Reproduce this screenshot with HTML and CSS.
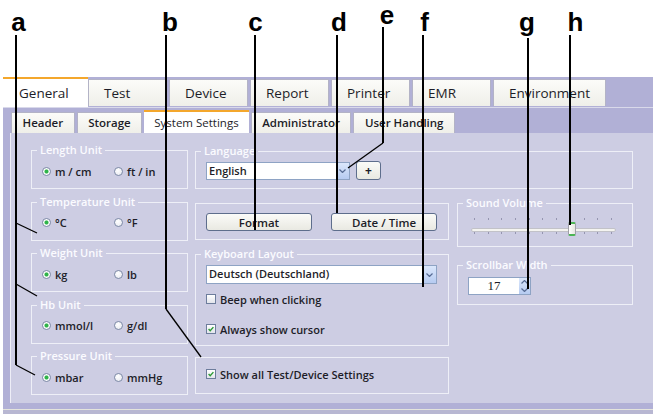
FILE: index.html
```html
<!DOCTYPE html>
<html>
<head>
    <title>System Settings</title>
    <link rel="stylesheet" href="styles.css">
</head>
<body>
    <div class="page">
        <div class="window">
            <div class="main-tabs">
                <div class="tab active">General</div>
                <div class="tab">Test</div>
                <div class="tab">Device</div>
                <div class="tab">Report</div>
                <div class="tab">Printer</div>
                <div class="tab">EMR</div>
                <div class="tab">Environment</div>
            </div>

            <div class="main-panel">
                <div class="sub-tabs">
                    <div class="sub-tab">Header</div>
                    <div class="sub-tab">Storage</div>
                    <div class="sub-tab active">System Settings</div>
                    <div class="sub-tab">Administrator</div>
                    <div class="sub-tab">User Handling</div>
                </div>

                <div class="content">
                    <!-- units -->
                    <div class="col-left">
                        <div class="group unit">
                            <span class="group-title">Length Unit</span>
                            <div class="options">
                                <label class="opt"><span class="radio on"></span>m / cm</label>
                                <label class="opt"><span class="radio"></span>ft / in</label>
                            </div>
                        </div>
                        <div class="group unit">
                            <span class="group-title">Temperature Unit</span>
                            <div class="options">
                                <label class="opt"><span class="radio on"></span>°C</label>
                                <label class="opt"><span class="radio"></span>°F</label>
                            </div>
                        </div>
                        <div class="group unit">
                            <span class="group-title">Weight Unit</span>
                            <div class="options">
                                <label class="opt"><span class="radio on"></span>kg</label>
                                <label class="opt"><span class="radio"></span>lb</label>
                            </div>
                        </div>
                        <div class="group unit">
                            <span class="group-title">Hb Unit</span>
                            <div class="options">
                                <label class="opt"><span class="radio on"></span>mmol/l</label>
                                <label class="opt"><span class="radio"></span>g/dl</label>
                            </div>
                        </div>
                        <div class="group unit">
                            <span class="group-title">Pressure Unit</span>
                            <div class="options">
                                <label class="opt"><span class="radio on"></span>mbar</label>
                                <label class="opt"><span class="radio"></span>mmHg</label>
                            </div>
                        </div>
                    </div>

                    <div class="col-main">
                        <div class="group language">
                            <span class="group-title">Language</span>
                            <div class="inline">
                                <div class="combo lang-combo">
                                    <span class="combo-text">English</span>
                                    <span class="combo-arrow"><svg width="7" height="4" viewBox="0 0 7 4"><polyline points="0.5,0.5 3.5,3.5 6.5,0.5"/></svg></span>
                                </div>
                                <button class="btn plus">+</button>
                            </div>
                        </div>

                        <div class="lower">
                            <div class="col-mid">
                                <div class="group format">
                                    <div class="inline buttons">
                                        <button class="btn wide">Format</button>
                                        <button class="btn wide">Date / Time</button>
                                    </div>
                                </div>

                                <div class="group keyboard">
                                    <span class="group-title">Keyboard Layout</span>
                                    <div class="combo kb-combo">
                                        <span class="combo-text">Deutsch (Deutschland)</span>
                                        <span class="combo-arrow"><svg width="7" height="4" viewBox="0 0 7 4"><polyline points="0.5,0.5 3.5,3.5 6.5,0.5"/></svg></span>
                                    </div>
                                    <label class="chk beep"><span class="check"></span>Beep when clicking</label>
                                    <label class="chk cursor"><span class="check"><svg viewBox="0 0 9 9"><polyline points="1.8,4.6 3.6,6.4 7.2,2.4"/></svg></span>Always show cursor</label>
                                </div>

                                <div class="group showall">
                                    <label class="chk"><span class="check"><svg viewBox="0 0 9 9"><polyline points="1.8,4.6 3.6,6.4 7.2,2.4"/></svg></span>Show all Test/Device Settings</label>
                                </div>
                            </div>

                            <div class="col-right">
                                <div class="group sound">
                                    <span class="group-title">Sound Volume</span>
                                    <div class="slider">
                                        <div class="ticks">
                                            <i></i><i></i><i></i><i></i><i></i><i></i><i></i><i></i><i></i><i></i><i></i>
                                        </div>
                                        <div class="track"></div>
                                        <div class="ticks">
                                            <i></i><i></i><i></i><i></i><i></i><i></i><i></i><i></i><i></i><i></i><i></i>
                                        </div>
                                        <div class="thumb" style="left: 97px;"></div>
                                    </div>
                                </div>

                                <div class="group scrollbar">
                                    <span class="group-title">Scrollbar Width</span>
                                    <div class="spinner">
                                        <span class="spin-value">17</span>
                                        <span class="spin-buttons">
                                            <svg width="7" height="4" viewBox="0 0 7 4"><polyline points="0.5,3.5 3.5,0.5 6.5,3.5"/></svg>
                                            <svg width="7" height="4" viewBox="0 0 7 4"><polyline points="0.5,0.5 3.5,3.5 6.5,0.5"/></svg>
                                        </span>
                                    </div>
                                </div>
                            </div>
                        </div>
                    </div>
                </div>
            </div>
            <div class="footer"></div>
        </div>

        <!-- callout leader lines -->
        <svg class="callouts" width="653" height="414" viewBox="0 0 653 414">
            <g class="leaders">
                <path d="M16 35 V365"/>
                <path d="M166 35 V309"/>
                <path d="M255 35 V230"/>
                <path d="M337 35 V213"/>
                <path d="M383 27 V143"/>
                <path d="M423 35 V287"/>
                <path d="M528 38 V289"/>
                <path d="M570 35 V225"/>
            </g>
            <g class="branches">
                <path d="M16 223 L37 233"/>
                <path d="M16 284 L37 296"/>
                <path d="M16 365 L35 375"/>
                <path d="M166 309 L201 357"/>
                <path d="M383 143 L348 168"/>
            </g>
        </svg>

        <!-- callout letters -->
        <span class="letter l-a">a</span>
        <span class="letter l-b">b</span>
        <span class="letter l-c">c</span>
        <span class="letter l-d">d</span>
        <span class="letter l-e">e</span>
        <span class="letter l-f">f</span>
        <span class="letter l-g">g</span>
        <span class="letter l-h">h</span>
    </div>
</body>
</html>
```

FILE: styles.css
```css
body {
    margin: 0;
    background-color: #fff;
    font-family: "Open Sans", "Noto Sans", sans-serif;
    color: #1d1d28;
}

.page {
    position: relative;
    width: 653px;
    height: 414px;
    padding-top: 77px;
    box-sizing: border-box;
    overflow: hidden;
}

.window {
    margin-left: 3px;
    background-color: #b1b0d6;
}

/* top level tabs */
.main-tabs {
    display: flex;
    height: 30px;
}

.tab {
    box-sizing: border-box;
    min-width: 79px;
    height: 27px;
    margin-top: 2px;
    margin-right: 2px;
    padding: 0 15px;
    font-size: 13.5px;
    line-height: 26px;
    background: linear-gradient(#fcfcf9, #efefe9);
    border: 1px solid #b3b3c6;
    border-bottom: none;
}

.tab.active {
    min-width: 85px;
    height: 30px;
    margin-top: 0;
    margin-right: 0;
    padding-left: 16px;
    background: #fff;
    border: none;
    border-top: 2px solid #f4a72c;
    line-height: 28px;
}

.main-panel {
    border-top: 1px solid #d9d9ea;
    padding: 2px 0 6px 7px;
}

/* second level tabs */
.sub-tabs {
    display: flex;
    height: 23px;
    padding-left: 1px;
}

.sub-tab {
    box-sizing: border-box;
    height: 21px;
    margin-top: 2px;
    margin-right: 2px;
    padding: 0 10.5px;
    font-size: 11.5px;
    font-weight: 600;
    line-height: 20px;
    background: linear-gradient(#fcfcf9, #efefe9);
    border: 1px solid #b3b3c6;
    border-bottom: none;
}

.sub-tab.active {
    height: 23px;
    margin-top: 0;
    padding: 0 10px;
    background: #fff;
    border: none;
    border-top: 2px solid #f4a72c;
    font-weight: 400;
    line-height: 21px;
}

.content {
    display: flex;
    gap: 7px;
    height: 270px;
    box-sizing: border-box;
    padding: 17px 0 0 20px;
    background-color: #cdcde3;
    border-left: 1px solid #eeeef7;
}

/* group boxes */
.group {
    position: relative;
    box-sizing: border-box;
    border: 1px solid #eeeff7;
}

.group-title {
    position: absolute;
    top: -8px;
    left: 5px;
    padding: 0 3px;
    background-color: #cdcde3;
    color: #fbfbff;
    font-size: 11px;
    font-weight: 600;
    line-height: 14px;
    white-space: nowrap;
}

.col-left {
    display: flex;
    flex-direction: column;
    gap: 12.5px;
    width: 157px;
}

.unit {
    height: 39px;
}

.options {
    display: flex;
    padding: 13px 0 0 10px;
}

.opt {
    display: flex;
    align-items: center;
    gap: 4px;
    width: 72px;
    height: 14px;
    font-size: 11px;
    font-weight: 600;
}

.radio {
    box-sizing: border-box;
    width: 9px;
    height: 9px;
    border: 1px solid #7d8aa6;
    border-radius: 50%;
    background: radial-gradient(circle at 40% 35%, #ffffff, #e4e6ee);
}

.radio.on {
    background: radial-gradient(circle, #2fb34a 0, #2fb34a 1.6px, #bfe8c6 2.2px, #ffffff 2.8px, #e9ebf1 100%);
}

.col-main {
    display: flex;
    flex-direction: column;
    width: 438px;
}

.language {
    height: 38px;
    margin-top: 1px;
    padding: 9px 0 0 10px;
}

.inline {
    display: flex;
    align-items: center;
}

.combo {
    display: flex;
    box-sizing: border-box;
    height: 18px;
    border: 1px solid #8ea3c4;
    background-color: #fff;
}

.lang-combo {
    width: 144px;
}

.kb-combo {
    width: 231px;
    height: 19px;
}

.combo-text {
    flex: 1;
    padding-left: 2px;
    font-size: 11px;
    font-weight: 600;
    line-height: 16px;
}

.combo-arrow {
    display: flex;
    align-items: center;
    justify-content: center;
    width: 13px;
    background: linear-gradient(#dbe7fb, #b6cbf1);
}

.combo-arrow svg,
.spin-buttons svg {
    fill: none;
    stroke: #566b93;
    stroke-width: 1.2;
}

.btn {
    box-sizing: border-box;
    height: 19px;
    padding: 0;
    border: 1px solid #5e6e8c;
    border-radius: 3px;
    background: linear-gradient(#fbfbf8, #e9e9e2);
    font-family: "Open Sans", "Noto Sans", sans-serif;
    font-size: 11.5px;
    font-weight: 600;
    color: #1d1d28;
}

.plus {
    width: 25px;
    margin-left: 6px;
    font-size: 12px;
    font-weight: 700;
    line-height: 15px;
}

.lower {
    display: flex;
    gap: 8px;
    margin-top: 14px;
}

.col-mid {
    display: flex;
    flex-direction: column;
    width: 254px;
}

.format {
    height: 37px;
    padding: 9px 0 0 10px;
}

.buttons {
    gap: 19px;
}

.btn.wide {
    width: 106px;
    height: 18px;
    line-height: 15px;
}

.keyboard {
    height: 92px;
    margin-top: 14px;
    padding: 10px 0 0 10px;
}

.chk {
    display: flex;
    align-items: center;
    gap: 4px;
    height: 14px;
    font-size: 11px;
    font-weight: 600;
}

.beep {
    margin-top: 8px;
}

.cursor {
    margin-top: 16px;
}

.check {
    box-sizing: border-box;
    width: 10px;
    height: 10px;
    border: 1px solid #6d7d9c;
    background: linear-gradient(#ffffff, #e3e5ec);
}

.check svg {
    display: block;
    width: 8px;
    height: 8px;
    fill: none;
    stroke: #2c9a35;
    stroke-width: 1.6;
}

.showall {
    height: 37px;
    margin-top: 11px;
    padding: 9px 0 0 10px;
}

.col-right {
    display: flex;
    flex-direction: column;
    width: 176px;
}

.sound {
    height: 44px;
}

.slider {
    position: relative;
    margin: 14px 16px 0 13px;
    height: 22px;
}

.ticks {
    display: flex;
    justify-content: space-between;
    height: 2px;
    padding: 0 4px 0 3px;
}

.ticks i {
    width: 1px;
    background-color: #9595b0;
}

.ticks:last-of-type {
    margin-top: 6px;
}

.track {
    box-sizing: border-box;
    height: 4px;
    margin-top: 8px;
    border: 1px solid #c2c2c8;
    border-radius: 2px;
    background-color: #f4f4f0;
}

.thumb {
    position: absolute;
    top: 4px;
    box-sizing: border-box;
    width: 8px;
    height: 14px;
    border: 1px solid #a0a0a8;
    border-top: 2px solid #4bb454;
    border-bottom: 2px solid #4bb454;
    border-radius: 2px;
    background: linear-gradient(90deg, #ffffff, #e6e6e0);
}

.scrollbar {
    height: 40px;
    margin-top: 18px;
    padding: 11px 0 0 10px;
}

.spinner {
    display: flex;
    box-sizing: border-box;
    width: 63px;
    height: 18px;
    border: 1px solid #8ea3c4;
    background-color: #fff;
}

.spin-value {
    flex: 1;
    text-align: center;
    font-family: "Liberation Serif", serif;
    font-size: 13px;
    line-height: 16px;
}

.spin-buttons {
    display: flex;
    flex-direction: column;
    align-items: center;
    justify-content: space-around;
    width: 11px;
    background: linear-gradient(#dbe7fb, #b6cbf1);
}

.footer {
    height: 4px;
    border-top: 1px solid #e4e4dc;
    background-color: #b8b7d2;
}

/* overlay: callouts */
.callouts {
    position: absolute;
    top: 0;
    left: 0;
    pointer-events: none;
}

.leaders path {
    fill: none;
    stroke: #000;
    stroke-width: 2;
}

.branches path {
    fill: none;
    stroke: #000;
    stroke-width: 1.3;
}

.letter {
    position: absolute;
    top: 12px;
    width: 20px;
    font-family: "Liberation Sans", Arial, sans-serif;
    font-size: 26px;
    font-weight: 700;
    line-height: 20px;
    text-align: center;
    color: #000;
}

.l-a { left: 8.5px; }
.l-b { left: 160px; }
.l-c { left: 245.5px; }
.l-d { left: 329px; }
.l-e { left: 377px; top: 5px; }
.l-f { left: 414.5px; }
.l-g { left: 517px; }
.l-h { left: 565.5px; }
```
